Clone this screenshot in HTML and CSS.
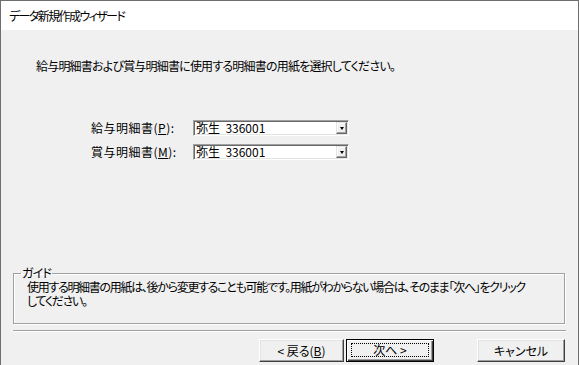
FILE: index.html
```html
<!DOCTYPE html>
<html lang="ja">
<head>
<meta charset="utf-8">
<link rel="stylesheet" href="styles.css">
</head>
<body>
<div class="window">
  <div class="header"><span class="title">データ新規作成ウィザード</span></div>
  <div class="content">
    <p class="lead">給与明細書および賞与明細書に使用する明細書の用紙を選択してください。</p>
    <div class="form">
      <div class="row">
        <label class="label">給与明細書(<u>P</u>):</label>
        <div class="combo"><span class="value">弥生&nbsp; 336001</span><span class="drop"><span class="tri"></span></span></div>
      </div>
      <div class="row">
        <label class="label">賞与明細書(<u>M</u>):</label>
        <div class="combo"><span class="value">弥生&nbsp; 336001</span><span class="drop"><span class="tri"></span></span></div>
      </div>
    </div>
    <fieldset class="guide">
      <legend class="legend">ガイド</legend>
      <p class="guide-text">使用する明細書の用紙は、後から変更することも可能です。用紙がわからない場合は、そのまま「次へ」をクリック<br>してください。</p>
    </fieldset>
    <div class="sep"></div>
    <div class="buttons">
      <button class="btn back">&lt;&nbsp;戻る(<u>B</u>)</button>
      <button class="btn next default"><span class="focus">次へ&nbsp;&gt;</span></button>
      <button class="btn cancel">キャンセル</button>
    </div>
  </div>
</div>
</body>
</html>
```
FILE: styles.css
```css
* { box-sizing: border-box; }
html, body { margin: 0; padding: 0; }
body {
  width: 579px;
  height: 365px;
  font-family: "Noto Sans CJK JP", "Noto Sans", sans-serif;
  font-size: 12px;
  font-feature-settings: "palt";
  color: #000;
  background: #f0f0f0;
}
.window {
  width: 579px;
  height: 365px;
  border: 1px solid #6e6e6e;
  border-bottom: none;
  display: flex;
  flex-direction: column;
  background: #f0f0f0;
}
.header {
  height: 29px;
  background: #fff;
  padding-left: 8px;
  display: flex;
  align-items: center;
}
.title { font-size: 12px; line-height: 14px; letter-spacing: -1.6px; }
.content {
  flex: 1;
  display: flex;
  flex-direction: column;
  padding: 0 12px 0 11px;
}
.lead {
  margin: 29px 0 0 24px;
  line-height: 14px;
  letter-spacing: -0.8px;
}
.form {
  margin: 47px 0 0 79px;
  display: flex;
  flex-direction: column;
  gap: 8px;
}
.row { display: flex; align-items: center; height: 16px; }
.label { width: 102px; line-height: 14px; letter-spacing: 0.5px; }
u { text-decoration: underline; text-underline-offset: 1px; }
.combo {
  width: 156px;
  height: 16px;
  background: #fff;
  border-top: 1px solid #a0a0a0;
  border-left: 1px solid #a0a0a0;
  border-right: 1px solid #fff;
  border-bottom: 1px solid #fff;
  box-shadow: inset 1px 1px 0 #696969, inset -1px -1px 0 #e3e3e3;
  display: flex;
  align-items: center;
  padding: 1px 1px 1px 2px;
}
.value { flex: 1; line-height: 14px; letter-spacing: 0; }
.drop {
  width: 11px;
  height: 12px;
  background: #f0f0f0;
  border-top: 1px solid #e3e3e3;
  border-left: 1px solid #e3e3e3;
  border-right: 1px solid #696969;
  border-bottom: 1px solid #696969;
  box-shadow: inset -1px -1px 0 #a0a0a0, inset 1px 1px 0 #fff;
  display: flex;
  align-items: center;
  justify-content: center;
}
.tri {
  width: 0; height: 0;
  border-left: 2.5px solid transparent;
  border-right: 2.5px solid transparent;
  border-top: 3px solid #000;
}
.guide {
  margin: 106px 1px 0 1px;
  height: 58px;
  border: 1px solid #a0a0a0;
  box-shadow: 1px 1px 0 #fff, inset 1px 1px 0 #fff;
  padding: 0 0 0 13px;
  min-width: 0;
}
.legend {
  padding: 0 1px;
  margin-left: -6px;
  line-height: 14px;
  letter-spacing: -0.8px;
}
.guide-text {
  margin: 0;
  line-height: 14px;
  letter-spacing: -1.3px;
}
.sep {
  margin: 6px 0 0 1px;
  height: 2px;
  border-top: 1px solid #a0a0a0;
  border-bottom: 1px solid #fff;
}
.buttons {
  margin-top: 7px;
  display: flex;
  padding-left: 247px;
}
.btn {
  font: inherit;
  font-feature-settings: "palt";
  height: 23px;
  background: #f0f0f0;
  border-top: 1px solid #fff;
  border-left: 1px solid #fff;
  border-right: 1px solid #404040;
  border-bottom: 1px solid #404040;
  box-shadow: inset -1px -1px 0 #a0a0a0, inset 1px 1px 0 #e3e3e3;
  padding: 0;
  line-height: 14px;
  color: #000;
  letter-spacing: 0;
}
.back { width: 85px; }
.next { width: 88px; margin-left: 2px; }
.cancel { width: 88px; margin-left: 43px; }
.default {
  border: 1px solid #000;
  box-shadow: inset 1px 1px 0 #fff, inset -1px -1px 0 #404040, inset -2px -2px 0 #a0a0a0;
  padding: 3px 4px 4px 4px;
}
.focus {
  display: block;
  height: 14px;
  border: 1px dotted #000;
  line-height: 12px;
}
```
